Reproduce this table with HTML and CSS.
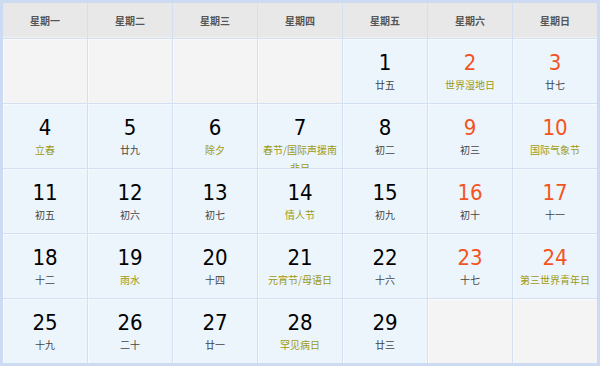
FILE: index.html
```html
<!DOCTYPE html>
<html lang="zh-CN">
<head>
<meta charset="utf-8">
<title>2月 日历</title>
<link rel="stylesheet" href="styles.css">
</head>
<body>
<div class="cal">
  <div class="hd">星期一</div>
  <div class="hd">星期二</div>
  <div class="hd">星期三</div>
  <div class="hd">星期四</div>
  <div class="hd">星期五</div>
  <div class="hd">星期六</div>
  <div class="hd">星期日</div>

  <div class="cell empty"></div>
  <div class="cell empty"></div>
  <div class="cell empty"></div>
  <div class="cell empty"></div>
  <div class="cell"><div class="num">1</div><div class="sub">廿五</div></div>
  <div class="cell"><div class="num red">2</div><div class="sub fest">世界湿地日</div></div>
  <div class="cell"><div class="num red">3</div><div class="sub">廿七</div></div>

  <div class="cell"><div class="num">4</div><div class="sub fest">立春</div></div>
  <div class="cell"><div class="num">5</div><div class="sub">廿九</div></div>
  <div class="cell"><div class="num">6</div><div class="sub fest">除夕</div></div>
  <div class="cell"><div class="num">7</div><div class="sub fest">春节/国际声援南非日</div></div>
  <div class="cell"><div class="num">8</div><div class="sub">初二</div></div>
  <div class="cell"><div class="num red">9</div><div class="sub">初三</div></div>
  <div class="cell"><div class="num red">10</div><div class="sub fest">国际气象节</div></div>

  <div class="cell"><div class="num">11</div><div class="sub">初五</div></div>
  <div class="cell"><div class="num">12</div><div class="sub">初六</div></div>
  <div class="cell"><div class="num">13</div><div class="sub">初七</div></div>
  <div class="cell"><div class="num">14</div><div class="sub fest">情人节</div></div>
  <div class="cell"><div class="num">15</div><div class="sub">初九</div></div>
  <div class="cell"><div class="num red">16</div><div class="sub">初十</div></div>
  <div class="cell"><div class="num red">17</div><div class="sub">十一</div></div>

  <div class="cell"><div class="num">18</div><div class="sub">十二</div></div>
  <div class="cell"><div class="num">19</div><div class="sub fest">雨水</div></div>
  <div class="cell"><div class="num">20</div><div class="sub">十四</div></div>
  <div class="cell"><div class="num">21</div><div class="sub fest">元宵节/母语日</div></div>
  <div class="cell"><div class="num">22</div><div class="sub">十六</div></div>
  <div class="cell"><div class="num red">23</div><div class="sub">十七</div></div>
  <div class="cell"><div class="num red">24</div><div class="sub fest">第三世界青年日</div></div>

  <div class="cell"><div class="num">25</div><div class="sub">十九</div></div>
  <div class="cell"><div class="num">26</div><div class="sub">二十</div></div>
  <div class="cell"><div class="num">27</div><div class="sub">廿一</div></div>
  <div class="cell"><div class="num">28</div><div class="sub fest">罕见病日</div></div>
  <div class="cell"><div class="num">29</div><div class="sub">廿三</div></div>
  <div class="cell empty"></div>
  <div class="cell empty"></div>
</div>
</body>
</html>
```
FILE: styles.css
```css
* { box-sizing: border-box; }
html, body { margin: 0; padding: 0; background: #fff; }
.cal {
  width: 600px;
  display: grid;
  grid-template-columns: repeat(7, 84px);
  grid-template-rows: 35px repeat(5, 64px);
  gap: 1px;
  background: #d3e0f1;
  border: 3px solid #cddbf2;
  font-family: "Noto Sans CJK SC", sans-serif;
}
.hd {
  background: #e8e8e8;
  color: #555;
  font-size: 10px;
  font-weight: bold;
  display: flex;
  align-items: center;
  justify-content: center;
  box-shadow: inset 0 -1px 0 #f0f0f0;
}
.cell {
  background: #ecf4fc;
  overflow: hidden;
  text-align: center;
  padding: 11px 2px 0;
  box-shadow: inset 1px 1px 0 #f6f9fd;
}
.cell.empty { background: #f4f4f4; box-shadow: inset 1px 1px 0 #fafafa; }
.num {
  font-family: "DejaVu Sans Condensed", "DejaVu Sans", sans-serif;
  font-size: 22px;
  line-height: 26px;
  color: #000;
}
.num.red { color: #f3541f; }
.sub {
  font-size: 10px;
  line-height: 18px;
  color: #444;
}
.sub.fest { color: #9d9a12; }
```
